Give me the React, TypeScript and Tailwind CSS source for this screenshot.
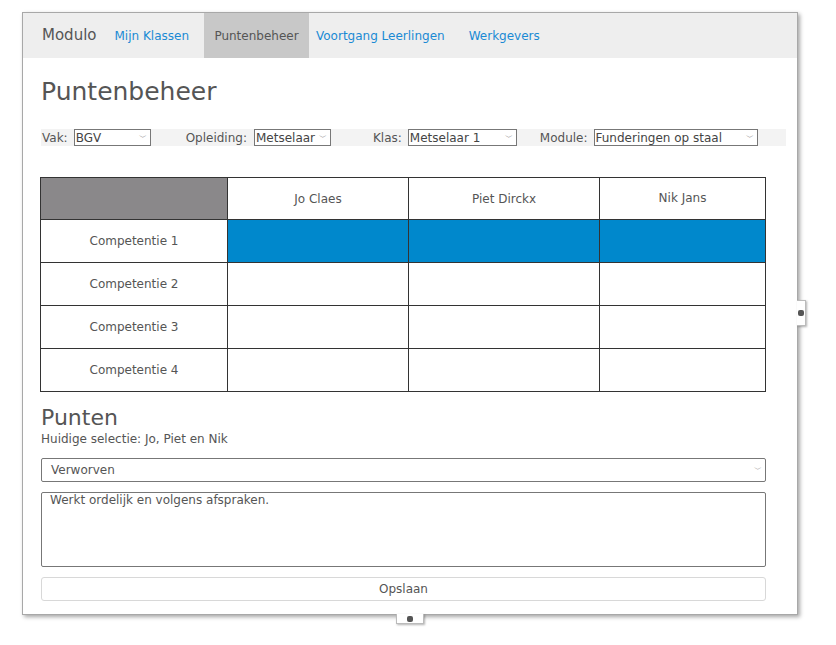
import React from 'react';

const font = { fontFamily: '"DejaVu Sans", Verdana, sans-serif' };

function Select({ value, className }: { value: string; className: string }) {
  return (
    <div className={`flex h-[17px] items-center justify-between border border-[#777] bg-white pl-[1px] pr-[3px] text-[12px] text-[#444] ${className}`}>
      <span className="leading-none">{value}</span>
      <span className="text-[8px] leading-none text-[#888]">﹀</span>
    </div>
  );
}

const students = ['Jo Claes', 'Piet Dirckx', 'Nik Jans'];
const rows = ['Competentie 1', 'Competentie 2', 'Competentie 3', 'Competentie 4'];

export default function App() {
  return (
    <div className="relative h-[645px] w-[836px] bg-white" style={font}>
      <div className="absolute left-[22px] top-[12px] h-[603px] w-[776px] border border-[#a8a8a8] bg-white shadow-[2px_2px_4px_rgba(0,0,0,0.35)]">
        {/* nav */}
        <div className="flex h-[45px] items-center bg-[#eeeeee] pl-[19px] text-[12px]">
          <span className="mr-[18px] text-[15px] text-[#555]">Modulo</span>
          <span className="mr-[15px] text-[#1a8ad4]">Mijn Klassen</span>
          <span className="flex h-full w-[105px] items-center justify-center bg-[#c8c8c8] text-[#555]">Puntenbeheer</span>
          <span className="ml-[7px] text-[#1a8ad4]">Voortgang Leerlingen</span>
          <span className="ml-[24px] text-[#1a8ad4]">Werkgevers</span>
        </div>

        <div className="px-[18px]">
          <h1 className="mt-[19px] text-[25px] leading-[30px] text-[#555]">Puntenbeheer</h1>

          {/* filters */}
          <div className="mt-[22px] flex h-[17px] w-[745px] items-center bg-[#f3f3f3] text-[12px] text-[#555]">
            <span className="ml-[1px] mr-[6px]">Vak:</span>
            <Select value="BGV" className="w-[77px]" />
            <span className="ml-[35px] mr-[7px]">Opleiding:</span>
            <Select value="Metselaar" className="w-[77px]" />
            <span className="ml-[42px] mr-[6px]">Klas:</span>
            <Select value="Metselaar 1" className="w-[109px]" />
            <span className="ml-[23px] mr-[6px]">Module:</span>
            <Select value="Funderingen op staal" className="w-[164px]" />
          </div>

          {/* table */}
          <div className="-ml-[1px] mt-[31px] grid w-[726px] grid-cols-[187px_181px_191px_166px] border-l border-t border-[#333] text-[12px] text-[#555]">
            <div className="h-[42px] border-b border-r border-[#333] bg-[#8a888a]" />
            {students.map((s, i) => (
              <div key={s} className={`flex h-[42px] items-center justify-center border-b border-r border-[#333] ${i === 2 ? 'pb-[2px]' : 'pt-[1px]'}`}>
                {s}
              </div>
            ))}
            {rows.map((r, ri) => (
              <React.Fragment key={r}>
                <div className="flex h-[43px] items-center justify-center border-b border-r border-[#333]">{r}</div>
                {students.map((s) => (
                  <div key={s} className={`border-b border-r border-[#333] ${ri === 0 ? 'bg-[#0088cc]' : ''}`} />
                ))}
              </React.Fragment>
            ))}
          </div>

          {/* punten */}
          <h2 className="mt-[13px] text-[22px] leading-[26px] text-[#555]">Punten</h2>
          <div className="mt-[1px] text-[12px] leading-[14px] text-[#555]">Huidige selectie: Jo, Piet en Nik</div>

          <div className="mt-[12px] flex h-[24px] w-[725px] items-center justify-between rounded-[2px] border border-[#777] pl-[9px] pr-[3px] text-[12px] text-[#555]">
            <span>Verworven</span>
            <span className="text-[8px] text-[#999]">﹀</span>
          </div>

          <div className="mt-[10px] h-[75px] w-[725px] rounded-[2px] border border-[#777] px-[8px] text-[12px] leading-[14px] text-[#555]">
            Werkt ordelijk en volgens afspraken.
          </div>

          <div className="mt-[10px] flex h-[24px] w-[725px] items-center justify-center rounded-[3px] border border-[#d8d8d8] text-[12px] text-[#555]">
            Opslaan
          </div>
        </div>
      </div>

      {/* resize handles */}
      <div className="absolute left-[797px] top-[300px] flex h-[26px] w-[9px] items-center justify-center border border-l-0 border-[#bbb] bg-white shadow-[1px_1px_2px_rgba(0,0,0,0.3)]">
        <div className="h-[6px] w-[6px] rounded-[2px] bg-[#555]" />
      </div>
      <div className="absolute left-[396px] top-[614px] flex h-[10px] w-[28px] items-center justify-center border border-t-0 border-[#bbb] bg-white shadow-[1px_1px_2px_rgba(0,0,0,0.3)]">
        <div className="h-[6px] w-[6px] rounded-[2px] bg-[#555]" />
      </div>
    </div>
  );
}
